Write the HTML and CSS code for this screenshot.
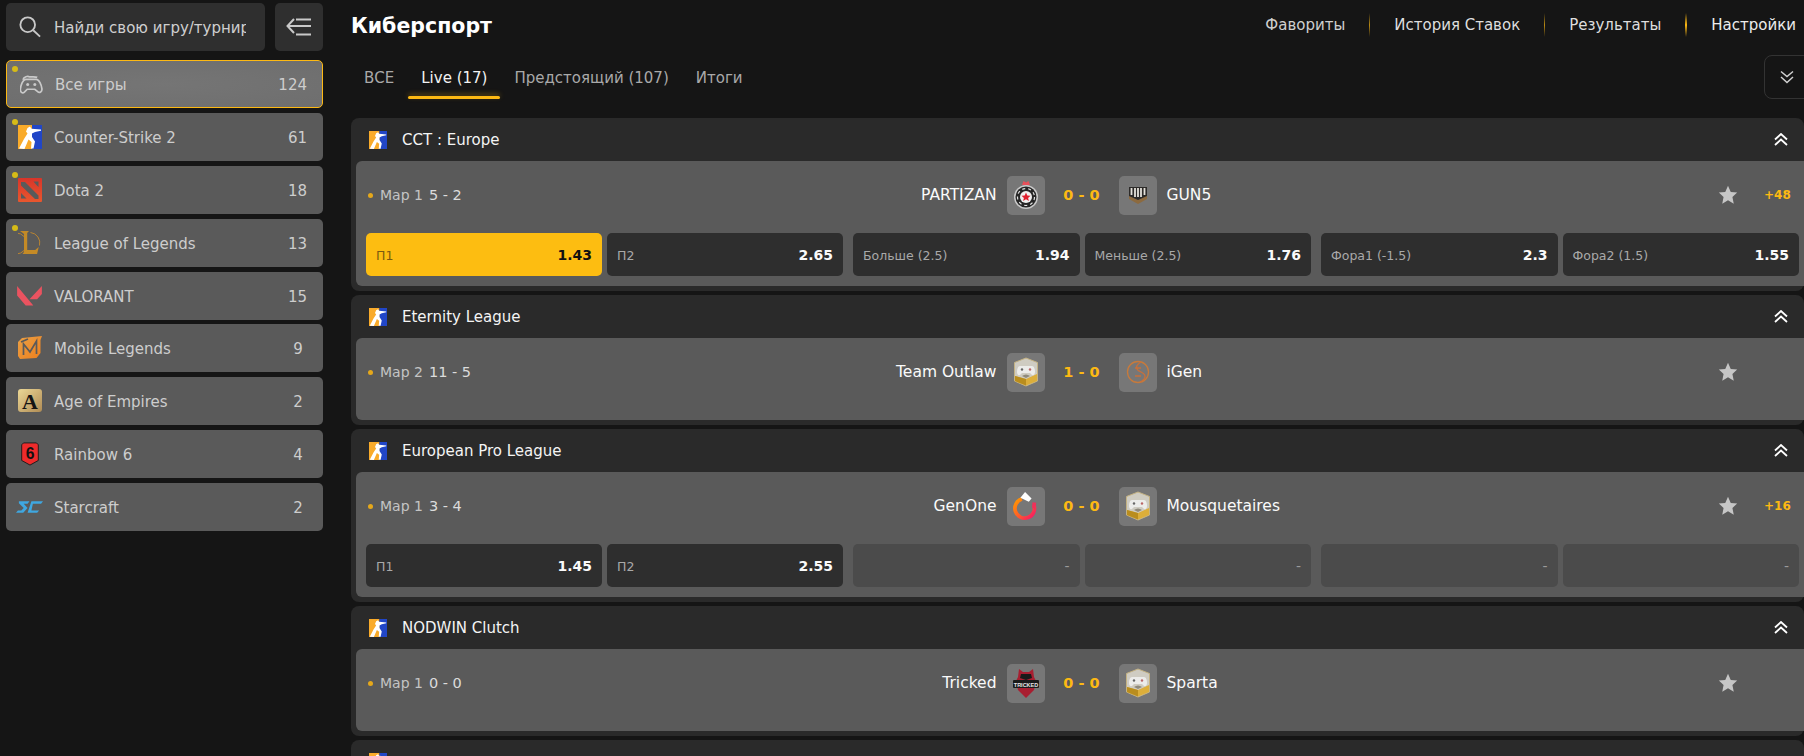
FILE: index.html
```html
<!DOCTYPE html>
<html lang="ru">
<head>
<meta charset="utf-8">
<title>Киберспорт</title>
<link rel="stylesheet" href="styles.css">
</head>
<body>
<svg class="defs" xmlns="http://www.w3.org/2000/svg">
  <defs>
    <linearGradient id="gGen" x1="0" y1="0" x2="1" y2="1"><stop offset="0" stop-color="#ff9a00"/><stop offset="0.55" stop-color="#ff5a2a"/><stop offset="1" stop-color="#f5116e"/></linearGradient>
    <linearGradient id="gAoe" x1="0" y1="0" x2="1" y2="1"><stop offset="0" stop-color="#ecd896"/><stop offset="1" stop-color="#b08c55"/></linearGradient>
    <linearGradient id="gMl" x1="0" y1="0" x2="1" y2="1"><stop offset="0" stop-color="#e9a046"/><stop offset="1" stop-color="#ee7f1c"/></linearGradient>
    <linearGradient id="gDota" x1="0" y1="0" x2="0" y2="1"><stop offset="0" stop-color="#d8352a"/><stop offset="1" stop-color="#e8572e"/></linearGradient>
    <symbol id="i-cs" viewBox="0 0 24 24">
      <rect width="14" height="24" fill="#f9ab2a"/><rect x="14" width="10" height="24" fill="#2146c7"/>
      <path d="M1 23.500 6 14l3.500-5.500-1.500-2L9.500 3 12 1.500 13.500 3.800 23 4.500v1.200L17 7l-3 1.500V12l3 4.500-1.500 7H13l.5-6.500-3-2.500-4 9.500z" fill="#fff"/>
    </symbol>
    <symbol id="i-dota" viewBox="0 0 24 24">
      <rect width="24" height="24" rx="1" fill="url(#gDota)"/>
      <path d="M3 4h4L20.500 17.500V21h-3.500L3 7.500zM15.500 3.500h5V9L18 6.500zM3 15l5.500 5.500H3z" fill="#5a5a5a"/>
    </symbol>
    <symbol id="i-lol" viewBox="0 0 24 24">
      <path d="M2 0h9l-1.800 2v17h8l3.500-3-1.600 7H4.500L6 21V3z" fill="#c48a26"/>
      <path d="M6 5.500a10.500 10.500 0 1 0 0 14M12.500 1.500a10.500 10.500 0 0 1 9 13" fill="none" stroke="#b98431" stroke-width="1"/>
    </symbol>
    <symbol id="i-val" viewBox="0 0 26 21">
      <path d="M0 0 17 20.500H9L0 10zM26 0v8.500L21 14H13z" fill="#ea5360"/>
    </symbol>
    <symbol id="i-ml" viewBox="0 0 24 24">
      <path d="M4 2 24 0l-1.500 4v13l-4 5L2 23l-2-3V6z" fill="url(#gMl)"/>
      <path d="M5.500 19V8l6.500 8 6.500-11v13M3 6l7-3" fill="none" stroke="#5a5a5a" stroke-width="1.700"/>
    </symbol>
    <symbol id="i-aoe" viewBox="0 0 24 24">
      <rect width="24" height="23" rx="3" fill="url(#gAoe)"/>
      <text x="12" y="20" text-anchor="middle" class="svg-a">A</text>
    </symbol>
    <symbol id="i-r6" viewBox="0 0 20 26">
      <path d="M3 1h14l2 2v17l-9 5-9-5V3z" fill="#ee2b2b" stroke="#1a1a1a" stroke-width="1"/>
      <text x="10" y="18.500" text-anchor="middle" class="svg-six">6</text>
    </symbol>
    <symbol id="i-sc" viewBox="0 0 28 14">
      <path d="M3 1h11l-2 2.500H8L12 8 7.500 13H0l2-2.500h3.500L8 8 3 3zM16 1h12l-2 2.500h-8.500l-1.500 7H24L22 13H12z" fill="#3fa7e0"/>
    </symbol>
    <symbol id="t-partizan" viewBox="0 0 26 30">
      <path d="M9 5 10.500 1l2.500 1.500L15.500 1 17 5z" fill="#e8505a"/>
      <circle cx="13" cy="17" r="12" fill="#c9c9c9"/>
      <circle cx="13" cy="17" r="10.500" fill="#262626"/>
      <circle cx="13" cy="17" r="8.500" fill="none" stroke="#e4e4e4" stroke-width="1.200" stroke-dasharray="3 3"/>
      <circle cx="13" cy="17" r="6" fill="#f1f1f1"/>
      <path d="m13 12.500 1.300 3 3.200.3-2.400 2.100.8 3.100-2.900-1.700-2.900 1.700.8-3.100-2.400-2.100 3.200-.3z" fill="#e0202e"/>
    </symbol>
    <symbol id="t-gun" viewBox="0 0 26 30">
      <path d="M4 8h18v11l-9 5-9-5z" fill="#8c6a3f"/>
      <path d="M4 7h18v9l-9 4-9-4z" fill="#2c2a28"/>
      <path d="M6.500 8v7M10 8v9M13 8v9M16 8v9M19.500 8v7" stroke="#e4e0da" stroke-width="1.800"/>
    </symbol>
    <symbol id="t-shield" viewBox="0 0 26 30">
      <path d="M13 1 24.500 5.500v18.500L13 29 1.500 24V5.500z" fill="#cfccc2" stroke="#c4b283" stroke-width="1"/>
      <path d="M2 19 13 22l11-5v7L13 28.500 2 24z" fill="#dcae3a"/>
      <path d="M13 22v6.500L2 24v-5z" fill="#b98d1e"/>
      <path d="M7 9h12c2 0 3 3 3 6s-2 4-3.500 2.500l-1.500-1.500H9l-1.500 1.500C6 19 4 18 4 15s1-6 3-6z" fill="#ececea"/>
      <circle cx="9" cy="12.500" r="1.200" fill="#666"/><circle cx="17" cy="12.500" r="1.200" fill="#b66"/>
      <path d="M9 19c2.500-2 5.500-2 8 0l-4 2z" fill="#8f8a7c"/>
    </symbol>
    <symbol id="t-igen" viewBox="0 0 26 26">
      <circle cx="13" cy="13" r="10.500" fill="none" stroke="#c67a3c" stroke-width="1.300"/>
      <path d="M16 3c-6 4-6 7 0 10s5 7-1 10M10 9h6M10 17h6" fill="none" stroke="#c9703a" stroke-width="1.300"/>
    </symbol>
    <symbol id="t-gen" viewBox="0 0 28 30">
      <path d="M22.500 14A10.500 10.500 0 1 1 9.500 7.500" fill="none" stroke="url(#gGen)" stroke-width="4"/>
      <path d="M21 11l4 .5-1 7-3.500-2z" fill="#f0305a"/>
      <path d="M8 6 13 0l7 7-3 3.500z" fill="#fff"/>
    </symbol>
    <symbol id="t-tricked" viewBox="0 0 26 30">
      <path d="M6 1l4 3h6l4-3 1 8 2 4-2 9-8 8-8-8-2-9 2-4z" fill="#a81e30"/>
      <path d="M8 6h10l1 4-6 2-6-2z" fill="#1a1a1a"/>
      <rect y="12" width="26" height="8" rx="1" fill="#1b1b1b"/>
      <text x="13" y="18.500" text-anchor="middle" class="svg-tricked">TRICKED</text>
    </symbol>
  </defs>
</svg>

<div class="app">
  <aside class="sidebar">
    <div class="side-top">
      <div class="search">
        <svg class="search-ic" viewBox="0 0 24 24" fill="none" stroke="#c9c9c9" stroke-width="2"><circle cx="9.500" cy="9.500" r="8"/><path d="m15.500 15.500 7.500 7"/></svg>
        <div class="search-text">Найди свою игру/турнир</div>
      </div>
      <div class="collapse">
        <svg viewBox="0 0 26 18" fill="none" stroke="#c9c9c9" stroke-width="2"><path d="M8 1 1.500 8 8 15M2 8h23M10 1.500h15M10 16.500h15"/></svg>
      </div>
    </div>
    <nav class="games">
      <a class="game active"><i class="dot"></i>
        <svg class="game-ic pad" viewBox="0 0 24 20" fill="none" stroke="#c9c9c9" stroke-width="1.800"><path d="M3 5c1-3.500 5-4 7-3 3 0 6-.5 8 .5"/><path d="M6 4.500h11c3 0 5.500 6 6 10 .3 3-2.500 5-4.500 3L15.500 15h-8l-3 3c-2 2-4.500 0-4.200-3.500C.8 10.500 3 4.500 6 4.500z"/><circle cx="8" cy="10" r="1.600" fill="#c9c9c9" stroke="none"/><circle cx="15.500" cy="10" r="1.600" fill="#c9c9c9" stroke="none"/></svg>
        <span class="game-name">Все игры</span><span class="game-count">124</span></a>
      <a class="game"><i class="dot"></i><svg class="game-ic"><use href="#i-cs"/></svg><span class="game-name">Counter-Strike 2</span><span class="game-count">61</span></a>
      <a class="game"><i class="dot"></i><svg class="game-ic"><use href="#i-dota"/></svg><span class="game-name">Dota 2</span><span class="game-count">18</span></a>
      <a class="game"><i class="dot"></i><svg class="game-ic"><use href="#i-lol"/></svg><span class="game-name">League of Legends</span><span class="game-count">13</span></a>
      <a class="game"><svg class="game-ic val"><use href="#i-val"/></svg><span class="game-name">VALORANT</span><span class="game-count">15</span></a>
      <a class="game"><svg class="game-ic"><use href="#i-ml"/></svg><span class="game-name">Mobile Legends</span><span class="game-count">9</span></a>
      <a class="game"><svg class="game-ic"><use href="#i-aoe"/></svg><span class="game-name">Age of Empires</span><span class="game-count">2</span></a>
      <a class="game"><svg class="game-ic"><use href="#i-r6"/></svg><span class="game-name">Rainbow 6</span><span class="game-count">4</span></a>
      <a class="game"><svg class="game-ic wide"><use href="#i-sc"/></svg><span class="game-name">Starcraft</span><span class="game-count">2</span></a>
    </nav>
  </aside>

  <main class="main">
    <header class="topbar">
      <h1 class="title">Киберспорт</h1>
      <div class="topnav">
        <a class="tn dim">Фавориты</a><i class="sep"></i>
        <a class="tn">История Ставок</a><i class="sep"></i>
        <a class="tn">Результаты</a><i class="sep strong"></i>
        <a class="tn">Настройки</a>
      </div>
    </header>
    <div class="tabsbar">
      <div class="tabs">
        <a class="tab">ВСЕ</a>
        <a class="tab on">Live (17)</a>
        <a class="tab">Предстоящий (107)</a>
        <a class="tab">Итоги</a>
      </div>
      <div class="expand">
        <svg viewBox="0 0 14 14" fill="none" stroke="#d0d0d0" stroke-width="1.500"><path d="m1 1.500 6 5 6-5M1 7l6 5.500L13 7"/></svg>
      </div>
    </div>

    <div class="groups">
      <section class="group">
        <div class="g-head"><svg class="g-ic"><use href="#i-cs"/></svg><span class="g-name">CCT : Europe</span>
          <svg class="g-chev" viewBox="0 0 14 13" fill="none" stroke="#fff" stroke-width="1.800"><path d="m1 6.500 6-5.500 6 5.500M1 12l6-5.500 6 5.500"/></svg></div>
        <div class="panel">
          <div class="row">
            <div class="meta"><i class="mdot"></i><span class="map">Мар 1</span><span class="mscore">5 - 2</span></div>
            <div class="teams">
              <span class="t-name home">PARTIZAN</span><span class="logo"><svg><use href="#t-partizan"/></svg></span>
              <span class="score">0 - 0</span>
              <span class="logo"><svg><use href="#t-gun"/></svg></span><span class="t-name">GUN5</span>
            </div>
            <div class="extra"><svg class="star" viewBox="0 0 24 24"><path d="m12 1 3.300 7.300 7.700.8-5.700 5.300 1.600 8L12 18.400 5.100 22.400l1.600-8L1 9.100l7.700-.8z" fill="#c6c6c6"/></svg><span class="more">+48</span></div>
          </div>
          <div class="bets">
            <div class="pair p1"><a class="bet hot"><span class="b-l">П1</span><b class="b-v">1.43</b></a><a class="bet"><span class="b-l">П2</span><b class="b-v">2.65</b></a></div>
            <div class="pair p2"><a class="bet"><span class="b-l">Больше (2.5)</span><b class="b-v">1.94</b></a><a class="bet"><span class="b-l">Меньше (2.5)</span><b class="b-v">1.76</b></a></div>
            <div class="pair p3"><a class="bet"><span class="b-l">Фора1 (-1.5)</span><b class="b-v">2.3</b></a><a class="bet"><span class="b-l">Фора2 (1.5)</span><b class="b-v">1.55</b></a></div>
          </div>
        </div>
      </section>

      <section class="group">
        <div class="g-head"><svg class="g-ic"><use href="#i-cs"/></svg><span class="g-name">Eternity League</span>
          <svg class="g-chev" viewBox="0 0 14 13" fill="none" stroke="#fff" stroke-width="1.800"><path d="m1 6.500 6-5.500 6 5.500M1 12l6-5.500 6 5.500"/></svg></div>
        <div class="panel">
          <div class="row">
            <div class="meta"><i class="mdot"></i><span class="map">Мар 2</span><span class="mscore">11 - 5</span></div>
            <div class="teams">
              <span class="t-name home">Team Outlaw</span><span class="logo"><svg><use href="#t-shield"/></svg></span>
              <span class="score">1 - 0</span>
              <span class="logo"><svg><use href="#t-igen"/></svg></span><span class="t-name">iGen</span>
            </div>
            <div class="extra"><svg class="star" viewBox="0 0 24 24"><path d="m12 1 3.300 7.300 7.700.8-5.700 5.300 1.600 8L12 18.400 5.100 22.400l1.600-8L1 9.100l7.700-.8z" fill="#c6c6c6"/></svg><span class="more"></span></div>
          </div>
        </div>
      </section>

      <section class="group">
        <div class="g-head"><svg class="g-ic"><use href="#i-cs"/></svg><span class="g-name">European Pro League</span>
          <svg class="g-chev" viewBox="0 0 14 13" fill="none" stroke="#fff" stroke-width="1.800"><path d="m1 6.500 6-5.500 6 5.500M1 12l6-5.500 6 5.500"/></svg></div>
        <div class="panel">
          <div class="row">
            <div class="meta"><i class="mdot"></i><span class="map">Мар 1</span><span class="mscore">3 - 4</span></div>
            <div class="teams">
              <span class="t-name home">GenOne</span><span class="logo"><svg><use href="#t-gen"/></svg></span>
              <span class="score">0 - 0</span>
              <span class="logo"><svg><use href="#t-shield"/></svg></span><span class="t-name">Mousquetaires</span>
            </div>
            <div class="extra"><svg class="star" viewBox="0 0 24 24"><path d="m12 1 3.300 7.300 7.700.8-5.700 5.300 1.600 8L12 18.400 5.100 22.400l1.600-8L1 9.100l7.700-.8z" fill="#c6c6c6"/></svg><span class="more">+16</span></div>
          </div>
          <div class="bets">
            <div class="pair p1"><a class="bet"><span class="b-l">П1</span><b class="b-v">1.45</b></a><a class="bet"><span class="b-l">П2</span><b class="b-v">2.55</b></a></div>
            <div class="pair p2"><a class="bet off"><span class="b-v">-</span></a><a class="bet off"><span class="b-v">-</span></a></div>
            <div class="pair p3"><a class="bet off"><span class="b-v">-</span></a><a class="bet off"><span class="b-v">-</span></a></div>
          </div>
        </div>
      </section>

      <section class="group">
        <div class="g-head"><svg class="g-ic"><use href="#i-cs"/></svg><span class="g-name">NODWIN Clutch</span>
          <svg class="g-chev" viewBox="0 0 14 13" fill="none" stroke="#fff" stroke-width="1.800"><path d="m1 6.500 6-5.500 6 5.500M1 12l6-5.500 6 5.500"/></svg></div>
        <div class="panel">
          <div class="row">
            <div class="meta"><i class="mdot"></i><span class="map">Мар 1</span><span class="mscore">0 - 0</span></div>
            <div class="teams">
              <span class="t-name home">Tricked</span><span class="logo"><svg><use href="#t-tricked"/></svg></span>
              <span class="score">0 - 0</span>
              <span class="logo"><svg><use href="#t-shield"/></svg></span><span class="t-name">Sparta</span>
            </div>
            <div class="extra"><svg class="star" viewBox="0 0 24 24"><path d="m12 1 3.300 7.300 7.700.8-5.700 5.300 1.600 8L12 18.400 5.100 22.400l1.600-8L1 9.100l7.700-.8z" fill="#c6c6c6"/></svg><span class="more"></span></div>
          </div>
        </div>
      </section>

      <section class="group">
        <div class="g-head"><svg class="g-ic"><use href="#i-cs"/></svg></div>
      </section>
    </div>
  </main>
</div>
</body>
</html>
```

FILE: styles.css
```css
* { box-sizing: border-box; }
html, body { margin: 0; height: 100%; overflow: hidden; background: #151515; }
body { font-family: "DejaVu Sans", "Noto Sans", sans-serif; color: #c8c8c8; width: 1804px; height: 756px; }
a { display: block; }
i { display: block; font-style: normal; }

.defs { display: block; width: 0; height: 0; }
.svg-a { font-family: "Liberation Serif", serif; font-weight: 700; font-size: 22px; fill: #141414; }
.svg-six { font-family: "Liberation Sans", sans-serif; font-weight: 700; font-size: 17px; fill: #111; }
.svg-tricked { font-family: "Liberation Sans", sans-serif; font-weight: 700; font-size: 5.500px; fill: #e8e8e8; }

.app { display: flex; height: 756px; overflow: hidden; }

/* sidebar */
.sidebar { flex: 0 0 351px; padding: 3px 28px 0 6px; }
.side-top { display: flex; gap: 10px; height: 48px; }
.search { width: 259px; display: flex; align-items: center; padding-left: 13px; gap: 13px; background: #2f2f2f; border-radius: 5px; }
.search-ic { width: 22px; height: 22px; flex: none; }
.search-text { width: 192px; overflow: hidden; white-space: nowrap; font-size: 15px; color: #cfcfcf; padding-top: 1px; }
.collapse { width: 48px; display: flex; align-items: center; justify-content: center; background: #2f2f2f; border-radius: 5px; }
.collapse svg { width: 26px; height: 18px; }

.games { display: flex; flex-direction: column; gap: 4.900px; margin-top: 9px; }
.game { position: relative; height: 48px; display: flex; align-items: center; background: #5a5a5a; border-radius: 5px; padding: 0 16px 0 12px; }
.game.active { background: radial-gradient(ellipse at center, #757575, #6e6e6e); border: 1px solid #fdb913; padding: 0 15px 0 13px; }
.dot { position: absolute; left: 6px; top: 6px; width: 6px; height: 6px; border-radius: 50%; background: #d6bb17; }
.active .dot { left: 5px; top: 5px; }
.game-ic { flex: none; width: 24px; height: 24px; }
.game-ic.pad { width: 23px; height: 19px; }
.game-ic.val { width: 25px; height: 20px; margin-left: -1px; }
.game-ic.wide { width: 27px; height: 22px; margin-left: -2px; margin-right: -1px; }
.game-name { flex: 1; margin-left: 12px; padding-top: 2px; font-size: 15px; color: #cdcdcd; white-space: nowrap; }
.game-count { min-width: 18px; padding-top: 2px; text-align: center; font-size: 15px; color: #cdcdcd; }

/* main */
.main { flex: 1; min-width: 0; }
.topbar { display: flex; justify-content: space-between; align-items: center; height: 50px; }
.title { margin: 0; font-size: 20.500px; font-weight: 700; color: #fff; line-height: 50px; padding-top: 1px; }
.topnav { display: flex; align-items: center; padding-right: 8px; }
.tn { font-size: 15px; color: #dedede; padding: 0 24px; white-space: nowrap; }
.tn:last-child { padding-right: 0; color: #ececec; }
.tn.dim { color: #cfcfcf; }
.sep { width: 1px; height: 24px; background: linear-gradient(180deg, transparent, #b98a14 50%, transparent); }
.sep.strong { width: 2px; background: linear-gradient(180deg, transparent, #fdb913 50%, transparent); }

.tabsbar { display: flex; justify-content: space-between; height: 68px; }
.tabs { display: flex; gap: 1px; height: 49px; }
.tab { position: relative; height: 49px; padding: 16px 13px 0; font-size: 15px; line-height: 24px; color: #a9a9a9; white-space: nowrap; }
.tab.on { color: #f2f2f2; }
.tab.on::after { content: ""; position: absolute; left: 0; right: 0; bottom: 0; height: 3px; border-radius: 2px; background: #fdb913; box-shadow: 0 -2px 5px rgba(253,185,19,.35); }
.expand { width: 48px; height: 44px; margin-top: 5px; margin-right: -8px; flex: none; display: flex; align-items: center; justify-content: flex-start; padding-left: 15px; border: 1px solid #333; border-radius: 8px; }
.expand svg { width: 14px; height: 14px; }

.groups { display: flex; flex-direction: column; gap: 4px; }
.group { background: #2a2a2a; border-radius: 8px; padding: 0 0 5px 5px; }
.g-head { display: flex; align-items: center; height: 43px; padding: 0 16px 0 13px; }
.g-ic { width: 18px; height: 18px; flex: none; }
.g-name { flex: 1; margin-left: 15px; font-size: 15px; color: #f4f4f4; white-space: nowrap; padding-top: 1px; }
.g-chev { width: 14px; height: 13px; flex: none; }

.panel { background: #5a5a5a; border-radius: 6px 0 0 6px; padding: 0 0 10px; }
.row { display: grid; grid-template-columns: 1fr 600px 1fr; align-items: center; height: 68px; margin-bottom: 4px; padding-left: 3px; }
.meta { display: flex; align-items: center; font-size: 14px; padding-left: 9px; }
.mdot { width: 5px; height: 5px; border-radius: 50%; background: #e5a81b; margin-right: 7px; }
.map { color: #c4c4c4; }
.mscore { margin-left: 6px; font-size: 14.500px; color: #dcdcdc; }

.teams { display: flex; align-items: center; }
.t-name { flex: 1; font-size: 15.500px; color: #fafafa; white-space: nowrap; margin-left: 10px; }
.t-name.home { text-align: right; margin: 0 10px 0 0; }
.logo { flex: none; width: 38px; height: 39px; background: #777; border-radius: 5px; display: flex; align-items: center; justify-content: center; }
.logo svg { width: 26px; height: 30px; }
.score { flex: none; width: 74px; text-align: center; font-size: 14.500px; font-weight: 700; color: #fdb913; white-space: nowrap; }

.extra { display: flex; align-items: center; justify-content: flex-end; padding-right: 5px; }
.star { width: 20px; height: 20px; flex: none; }
.more { width: 35px; margin-left: 26px; font-size: 12px; font-weight: 700; color: #fdb913; }

.bets { display: flex; gap: 10px; padding-left: 10px; }
.pair { display: grid; grid-template-columns: 1fr 1fr; gap: 5px; height: 43px; }
.p1 { width: 477px; }
.p2 { width: 458px; }
.p3 { width: 478px; }
.bet { display: flex; align-items: center; justify-content: space-between; background: #2e2e2e; border-radius: 5px; padding: 0 10px; }
.b-l { font-size: 12.500px; color: #a9a9a9; padding-top: 1px; white-space: nowrap; }
.b-v { font-size: 14px; font-weight: 700; color: #fafafa; }
.bet.hot { background: #fdbd11; }
.hot .b-l { color: #7a5a10; }
.hot .b-v { color: #111; }
.bet.off { background: #4b4b4b; justify-content: flex-end; }
.off .b-v { font-size: 14px; font-weight: 400; color: #9a9a9a; }
```
